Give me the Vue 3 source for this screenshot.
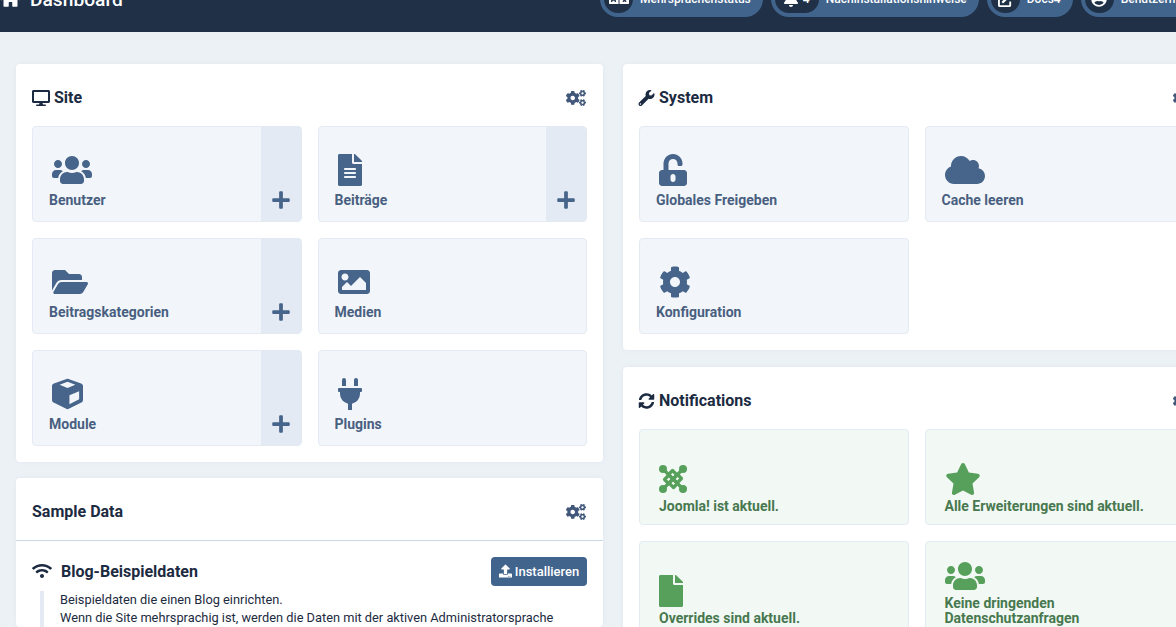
<script setup>
const I = {
  users: ['0 0 640 512', 'M96 224c35.3 0 64-28.7 64-64s-28.7-64-64-64-64 28.7-64 64 28.7 64 64 64zm448 0c35.3 0 64-28.7 64-64s-28.7-64-64-64-64 28.7-64 64 28.7 64 64 64zm32 32h-64c-17.6 0-33.5 7.1-45.1 18.6 40.3 22.1 68.9 62 75.1 109.4h66c17.7 0 32-14.3 32-32v-32c0-35.3-28.7-64-64-64zm-256 0c61.9 0 112-50.1 112-112S381.9 32 320 32 208 82.1 208 144s50.1 112 112 112zm76.8 32h-8.3c-20.8 10-43.9 16-68.5 16s-47.6-6-68.5-16h-8.3C179.6 288 128 339.6 128 403.2V432c0 26.5 21.5 48 48 48h288c26.5 0 48-21.5 48-48v-28.8c0-63.6-51.6-115.2-115.2-115.2zm-223.7-13.4C161.5 263.1 145.6 256 128 256H64c-35.3 0-64 28.7-64 64v32c0 17.7 14.3 32 32 32h65.9c6.3-47.4 34.9-87.3 75.2-109.4z'],
  fileAlt: ['0 0 384 512', 'M224 136V0H24C10.7 0 0 10.7 0 24v464c0 13.3 10.7 24 24 24h336c13.3 0 24-10.7 24-24V160H248c-13.2 0-24-10.8-24-24zm64 236c0 6.6-5.4 12-12 12H108c-6.6 0-12-5.4-12-12v-8c0-6.6 5.4-12 12-12h168c6.6 0 12 5.4 12 12v8zm0-64c0 6.6-5.4 12-12 12H108c-6.6 0-12-5.4-12-12v-8c0-6.6 5.4-12 12-12h168c6.6 0 12 5.4 12 12v8zm0-72v8c0 6.6-5.4 12-12 12H108c-6.6 0-12-5.4-12-12v-8c0-6.6 5.4-12 12-12h168c6.6 0 12 5.4 12 12zm96-114.1v6.1H256V0h6.1c6.4 0 12.5 2.5 17 7l97.9 98c4.5 4.5 7 10.6 7 16.9z'],
  file: ['0 0 384 512', 'M224 136V0H24C10.7 0 0 10.7 0 24v464c0 13.3 10.7 24 24 24h336c13.3 0 24-10.7 24-24V160H248c-13.2 0-24-10.8-24-24zm160-14.1v6.1H256V0h6.1c6.4 0 12.5 2.5 17 7l97.9 98c4.5 4.5 7 10.6 7 16.9z'],
  folder: ['0 0 576 512', 'M572.694 292.093L500.27 416.248A63.997 63.997 0 0 1 444.989 448H45.025c-18.523 0-30.064-20.093-20.731-36.093l72.424-124.155A64 64 0 0 1 152 256h399.964c18.523 0 30.064 20.093 20.73 36.093zM152 224h328v-48c0-26.51-21.49-48-48-48H272l-64-64H48C21.49 64 0 85.49 0 112v278.046l69.077-118.418C86.214 242.25 117.989 224 152 224z'],
  image: ['0 0 512 512', 'M464 448H48c-26.51 0-48-21.49-48-48V112c0-26.51 21.49-48 48-48h416c26.51 0 48 21.49 48 48v288c0 26.51-21.49 48-48 48zM112 120c-30.928 0-56 25.072-56 56s25.072 56 56 56 56-25.072 56-56-25.072-56-56-56zM64 384h384V272l-87.515-87.515c-4.686-4.686-12.284-4.686-16.971 0L208 320l-55.515-55.515c-4.686-4.686-12.284-4.686-16.971 0L64 336v48z'],
  cube: ['0 0 512 512', 'M239.1 6.3l-208 78c-18.7 7-31.1 25-31.1 45v225.1c0 18.2 10.3 34.8 26.5 42.9l208 104c13.5 6.8 29.4 6.8 42.9 0l208-104c16.3-8.1 26.5-24.8 26.5-42.9V129.3c0-20-12.4-37.9-31.1-44.9l-208-78C262 2.2 250 2.2 239.1 6.3zM256 52l130 52-130 54-130-54zM288 424.4V275.5l160-65v133.9l-160 80z'],
  plug: ['0 0 384 512', 'M320,32a32,32,0,0,0-64,0v96h64Zm48,128H16A16,16,0,0,0,0,176v32a16,16,0,0,0,16,16H32v32A160.07,160.07,0,0,0,160,412.8V512h64V412.8A160.07,160.07,0,0,0,352,256V224h16a16,16,0,0,0,16-16V176A16,16,0,0,0,368,160ZM128,32a32,32,0,0,0-64,0v96h64Z'],
  unlock: ['0 0 448 512', 'M400 256H152V152.9c0-39.6 31.7-72.5 71.3-72.9 40-.4 72.7 32.1 72.7 72v16c0 13.3 10.7 24 24 24h32c13.3 0 24-10.7 24-24v-16C376 68 307.5-.3 223.5 0 139.5.3 72 69.5 72 153.5V256H48c-26.5 0-48 21.5-48 48v160c0 26.5 21.5 48 48 48h352c26.5 0 48-21.5 48-48V304c0-26.5-21.5-48-48-48zM264 408c0 22.1-17.9 40-40 40s-40-17.9-40-40v-48c0-22.1 17.9-40 40-40s40 17.9 40 40v48z'],
  cloud: ['0 0 640 512', 'M537.6 226.6c4.1-10.7 6.4-22.4 6.4-34.6 0-53-43-96-96-96-19.7 0-38.1 6-53.3 16.2C367 64.2 315.3 32 256 32c-88.4 0-160 71.6-160 160 0 2.7.1 5.4.2 8.1C40.2 219.8 0 273.2 0 336c0 79.5 64.5 144 144 144h368c70.7 0 128-57.3 128-128 0-61.9-44-113.6-102.4-125.4z'],
  cog: ['0 0 512 512', 'M487.4 315.7l-42.6-24.6c4.3-23.2 4.3-47 0-70.2l42.6-24.6c4.9-2.8 7.1-8.6 5.5-14-11.1-35.6-30-67.8-54.7-94.6-3.8-4.1-10-5.1-14.8-2.3L380.8 110c-17.9-15.4-38.5-27.3-60.8-35.1V25.8c0-5.6-3.9-10.5-9.4-11.7-36.7-8.2-74.3-7.8-109.2 0-5.5 1.2-9.4 6.1-9.4 11.7V75c-22.2 7.9-42.8 19.8-60.8 35.1L88.7 85.5c-4.9-2.8-11-1.9-14.8 2.3-24.7 26.7-43.6 58.9-54.7 94.6-1.7 5.4.6 11.2 5.5 14L67.3 221c-4.3 23.2-4.3 47 0 70.2l-42.6 24.6c-4.9 2.8-7.1 8.6-5.5 14 11.1 35.6 30 67.8 54.7 94.6 3.8 4.1 10 5.1 14.8 2.3l42.6-24.6c17.9 15.4 38.5 27.3 60.8 35.1v49.2c0 5.6 3.9 10.5 9.4 11.7 36.7 8.2 74.3 7.8 109.2 0 5.5-1.2 9.4-6.1 9.4-11.7v-49.2c22.2-7.9 42.8-19.8 60.8-35.1l42.6 24.6c4.9 2.8 11 1.9 14.8-2.3 24.7-26.7 43.6-58.9 54.7-94.6 1.5-5.5-.7-11.3-5.6-14.1zM256 336c-44.1 0-80-35.9-80-80s35.9-80 80-80 80 35.9 80 80-35.9 80-80 80z'],
  cogs: ['0 0 640 512', 'M512.1 191l-8.2 14.3c-3 5.3-9.4 7.5-15.1 5.4-11.8-4.4-22.6-10.7-32.1-18.6-4.6-3.8-5.8-10.5-2.8-15.7l8.2-14.3c-6.9-8-12.3-17.3-15.9-27.4h-16.5c-6 0-11.2-4.3-12.2-10.3-2-12-2.1-24.6 0-37.1 1-6 6.2-10.4 12.2-10.4h16.5c3.6-10.1 9-19.4 15.9-27.4l-8.2-14.3c-3-5.2-1.9-11.9 2.8-15.7 9.5-7.9 20.4-14.2 32.1-18.6 5.7-2.1 12.1.1 15.1 5.4l8.2 14.3c10.5-1.9 21.2-1.9 31.7 0L552 6.3c3-5.3 9.4-7.5 15.1-5.4 11.8 4.4 22.6 10.7 32.1 18.6 4.6 3.8 5.8 10.5 2.8 15.7l-8.2 14.3c6.9 8 12.3 17.3 15.9 27.4h16.5c6 0 11.2 4.3 12.2 10.3 2 12 2.1 24.6 0 37.1-1 6-6.2 10.4-12.2 10.4h-16.5c-3.6 10.1-9 19.4-15.9 27.4l8.2 14.3c3 5.2 1.9 11.9-2.8 15.7-9.5 7.9-20.4 14.2-32.1 18.6-5.7 2.1-12.1-.1-15.1-5.4l-8.2-14.3c-10.4 1.9-21.2 1.9-31.7 0zm-10.5-58.8c38.5 29.6 82.4-14.3 52.8-52.8-38.5-29.7-82.4 14.3-52.8 52.8zM386.3 286.1l33.7 16.8c10.1 5.8 14.5 18.1 10.5 29.1-8.9 24.2-26.4 46.4-42.6 65.8-7.4 8.9-20.2 11.1-30.3 5.3l-29.1-16.8c-16 13.7-34.6 24.6-54.9 31.7v33.6c0 11.6-8.3 21.6-19.7 23.6-24.6 4.2-50.4 4.4-75.9 0-11.5-2-20-11.9-20-23.6V418c-20.3-7.2-38.9-18-54.9-31.7L74 403c-10 5.8-22.9 3.6-30.3-5.3-16.2-19.4-33.3-41.6-42.2-65.7-4-10.9.4-23.2 10.5-29.1l33.3-16.8c-3.9-20.9-3.9-42.4 0-63.4L12 205.8c-10.1-5.8-14.6-18.1-10.5-29 8.9-24.2 26-46.4 42.2-65.8 7.4-8.9 20.2-11.1 30.3-5.3l29.1 16.8c16-13.7 34.6-24.6 54.9-31.7V57.1c0-11.5 8.2-21.5 19.6-23.5 24.6-4.2 50.5-4.4 76-.1 11.5 2 20 11.9 20 23.6v33.6c20.3 7.2 38.9 18 54.9 31.7l29.1-16.8c10-5.8 22.9-3.6 30.3 5.3 16.2 19.4 33.2 41.6 42.1 65.8 4 10.9.1 23.2-10 29.1l-33.7 16.8c3.9 21 3.9 42.5 0 63.5zm-117.6 21.1c59.2-77-28.7-164.9-105.7-105.7-59.2 77 28.7 164.9 105.7 105.7zm243.4 182.7l-8.2 14.3c-3 5.3-9.4 7.5-15.1 5.4-11.8-4.4-22.6-10.7-32.1-18.6-4.6-3.8-5.8-10.5-2.8-15.7l8.2-14.3c-6.9-8-12.3-17.3-15.9-27.4h-16.5c-6 0-11.2-4.3-12.2-10.3-2-12-2.1-24.6 0-37.1 1-6 6.2-10.4 12.2-10.4h16.5c3.6-10.1 9-19.4 15.9-27.4l-8.2-14.3c-3-5.2-1.9-11.9 2.8-15.7 9.5-7.9 20.4-14.2 32.1-18.6 5.7-2.1 12.1.1 15.1 5.4l8.2 14.3c10.5-1.9 21.2-1.9 31.7 0l8.2-14.3c3-5.3 9.4-7.5 15.1-5.4 11.8 4.4 22.6 10.7 32.1 18.6 4.6 3.8 5.8 10.5 2.8 15.7l-8.2 14.3c6.9 8 12.3 17.3 15.9 27.4h16.5c6 0 11.2 4.3 12.2 10.3 2 12 2.1 24.6 0 37.1-1 6-6.2 10.4-12.2 10.4h-16.5c-3.6 10.1-9 19.4-15.9 27.4l8.2 14.3c3 5.2 1.9 11.9-2.8 15.7-9.5 7.9-20.4 14.2-32.1 18.6-5.7 2.1-12.1-.1-15.1-5.4l-8.2-14.3c-10.4 1.9-21.2 1.9-31.7 0zM501.6 431c38.5 29.6 82.4-14.3 52.8-52.8-38.5-29.6-82.4 14.3-52.8 52.8z'],
  desktop: ['0 0 576 512', 'M528 0H48C21.5 0 0 21.5 0 48v320c0 26.5 21.5 48 48 48h192l-16 48h-72c-13.3 0-24 10.7-24 24s10.7 24 24 24h272c13.3 0 24-10.7 24-24s-10.7-24-24-24h-72l-16-48h192c26.5 0 48-21.5 48-48V48c0-26.5-21.5-48-48-48zm-16 352H64V64h448v288z'],
  wrench: ['0 0 512 512', 'M507.73 109.1c-2.24-9.03-13.54-12.09-20.12-5.51l-74.36 74.36-67.88-11.31-11.31-67.88 74.36-74.36c6.62-6.62 3.43-17.9-5.66-20.16-47.38-11.74-99.55.91-136.58 37.93-39.64 39.64-50.55 97.1-34.05 147.2L18.74 402.76c-24.99 24.99-24.99 65.51 0 90.5 24.99 24.99 65.51 24.99 90.5 0l213.21-213.21c50.12 16.71 107.47 5.68 147.37-34.22 37.07-37.07 49.7-89.32 37.91-136.73zM64 472c-13.25 0-24-10.75-24-24 0-13.26 10.75-24 24-24s24 10.74 24 24c0 13.25-10.75 24-24 24z'],
  sync: ['0 0 512 512', 'M370.72 133.28C339.458 104.008 298.888 87.962 255.848 88c-77.458.068-144.328 53.178-162.791 126.85-1.344 5.363-6.122 9.15-11.651 9.15H24.103c-7.498 0-13.194-6.807-11.807-14.176C33.933 94.924 134.813 8 256 8c66.448 0 126.791 26.136 171.315 68.685L463.03 40.97C478.149 25.851 504 36.559 504 57.941V192c0 13.255-10.745 24-24 24H345.941c-21.382 0-32.09-25.851-16.971-40.971l41.75-41.749zM32 296h134.059c21.382 0 32.09 25.851 16.971 40.971l-41.75 41.75c31.262 29.273 71.835 45.319 114.876 45.28 77.418-.07 144.315-53.144 162.787-126.849 1.344-5.363 6.122-9.15 11.651-9.15h57.304c7.498 0 13.194 6.807 11.807 14.176C478.067 417.076 377.187 504 256 504c-66.448 0-126.791-26.136-171.315-68.685L48.97 471.03C33.851 486.149 8 475.441 8 454.059V320c0-13.255 10.745-24 24-24z'],
  star: ['0 0 576 512', 'M259.3 17.8L194 150.2 47.9 171.5c-26.2 3.8-36.7 36.1-17.7 54.6l105.7 103-25 145.5c-4.5 26.3 23.2 46 46.4 33.7L288 439.6l130.7 68.7c23.2 12.2 50.9-7.4 46.4-33.7l-25-145.5 105.7-103c19-18.5 8.5-50.8-17.7-54.6L382 150.2 316.7 17.8c-11.7-23.6-45.6-23.9-57.4 0z'],
  plus: ['0 0 448 512', 'M416 208H272V64c0-17.67-14.33-32-32-32h-32c-17.67 0-32 14.33-32 32v144H32c-17.67 0-32 14.33-32 32v32c0 17.67 14.33 32 32 32h144v144c0 17.67 14.33 32 32 32h32c17.67 0 32-14.33 32-32V304h144c17.67 0 32-14.33 32-32v-32c0-17.67-14.33-32-32-32z'],
  wifi: ['0 0 640 512', 'M634.91 154.88C457.74-8.99 182.19-8.93 5.09 154.88c-6.66 6.16-6.79 16.59-.35 22.98l34.24 33.97c6.14 6.1 16.02 6.23 22.4.38 145.92-133.68 371.3-133.71 517.25 0 6.38 5.85 16.26 5.71 22.4-.38l34.24-33.97c6.43-6.39 6.3-16.82-.36-22.98zM320 352c-35.35 0-64 28.65-64 64s28.65 64 64 64 64-28.65 64-64-28.65-64-64-64zm202.67-83.59c-115.26-101.93-290.21-101.82-405.34 0-6.9 6.1-7.12 16.69-.57 23.15l34.44 33.99c6 5.92 15.66 6.32 22.05.8 83.95-72.57 209.74-72.41 293.49 0 6.39 5.52 16.05 5.13 22.05-.8l34.44-33.99c6.56-6.46 6.33-17.06-.56-23.15z'],
  upload: ['0 0 512 512', 'M296 384h-80c-13.3 0-24-10.7-24-24V192h-87.7c-17.8 0-26.7-21.5-14.1-34.1L242.3 5.7c7.5-7.5 19.8-7.5 27.3 0l152.2 152.2c12.6 12.6 3.7 34.1-14.1 34.1H320v168c0 13.3-10.7 24-24 24zm216-8v112c0 13.3-10.7 24-24 24H24c-13.3 0-24-10.7-24-24V376c0-13.3 10.7-24 24-24h136v8c0 30.9 25.1 56 56 56h80c30.9 0 56-25.1 56-56v-8h136c13.3 0 24 10.7 24 24zm-124 88c0-11-9-20-20-20s-20 9-20 20 9 20 20 20 20-9 20-20zm64 0c0-11-9-20-20-20s-20 9-20 20 9 20 20 20 20-9 20-20z'],
  bell: ['0 0 448 512', 'M224 512c35.32 0 63.97-28.65 63.97-64H160.03c0 35.35 28.65 64 63.97 64zm215.39-149.71c-19.32-20.76-55.47-51.99-55.47-154.29 0-77.7-54.48-139.9-127.94-155.16V32c0-17.67-14.32-32-31.98-32s-31.98 14.33-31.98 32v20.84C118.56 68.1 64.08 130.3 64.08 208c0 102.3-36.15 133.53-55.47 154.29-6 6.45-8.66 14.16-8.61 21.71.11 16.4 12.98 32 32.1 32h383.8c19.12 0 32-15.6 32.1-32 .05-7.55-2.61-15.27-8.61-21.71z'],
  home: ['0 0 576 512', 'M280.37 148.26L96 300.11V464a16 16 0 0 0 16 16l112.06-.29a16 16 0 0 0 15.92-16V368a16 16 0 0 1 16-16h64a16 16 0 0 1 16 16v95.64a16 16 0 0 0 16 16.05L464 480a16 16 0 0 0 16-16V300L295.67 148.26a12.19 12.19 0 0 0-15.3 0zM571.6 251.47L488 182.56V44.05a12 12 0 0 0-12-12h-56a12 12 0 0 0-12 12v72.61L318.47 43a48 48 0 0 0-61 0L4.34 251.47a12 12 0 0 0-1.6 16.9l25.5 31A12 12 0 0 0 45.15 301l235.22-193.74a12.19 12.19 0 0 1 15.3 0L530.9 301a12 12 0 0 0 16.9-1.6l25.5-31a12 12 0 0 0-1.7-16.93z'],
  extLink: ['0 0 512 512', 'M432 320h-32a16 16 0 0 0-16 16v112H64V128h144a16 16 0 0 0 16-16V80a16 16 0 0 0-16-16H48a48 48 0 0 0-48 48v352a48 48 0 0 0 48 48h352a48 48 0 0 0 48-48V336a16 16 0 0 0-16-16zM488 0H360c-21.37 0-32.05 25.91-17 41l35.73 35.73L135 320.37a24 24 0 0 0 0 34L157.67 377a24 24 0 0 0 34 0l243.61-243.68L471 169c15 15 41 4.5 41-17V24a24 24 0 0 0-24-24z'],
  userCircle: ['0 0 496 512', 'M248 8C111 8 0 119 0 256s111 248 248 248 248-111 248-248S385 8 248 8zm0 96c48.6 0 88 39.4 88 88s-39.4 88-88 88-88-39.4-88-88 39.4-88 88-88zm0 344c-58.7 0-111.3-26.6-146.5-68.2 18.8-35.4 55.6-59.8 98.5-59.8 2.4 0 4.8.4 7.1 1.1 13 4.2 26.6 6.9 40.9 6.9 14.3 0 28-2.7 40.9-6.9 2.3-.7 4.7-1.1 7.1-1.1 42.9 0 79.7 24.4 98.5 59.8C359.3 421.4 306.7 448 248 448z'],
  language: ['0 0 640 512', 'M152.1 236.2c-3.5-12.1-7.8-33.2-7.8-33.2h-.5s-4.3 21.1-7.8 33.2l-11.1 37.5H163zM616 96H336v320h280c13.3 0 24-10.7 24-24V120c0-13.3-10.7-24-24-24zm-24 120c0 6.6-5.4 12-12 12h-11.4c-6.9 23.6-21.7 47.4-42.7 69.9 8.4 6.4 17.1 12.5 26.1 18 5.5 3.4 7.3 10.5 4.1 16.2l-7.9 13.9c-3.4 5.9-10.9 7.8-16.7 4.3-12.6-7.8-24.5-16.1-35.4-24.9-10.9 8.7-22.7 17.1-35.4 24.9-5.8 3.5-13.3 1.6-16.7-4.3l-7.9-13.9c-3.2-5.6-1.4-12.8 4.2-16.2 9.3-5.7 18-11.7 26.1-18-7.9-8.4-14.9-17-21-25.7-4-5.7-2.2-13.6 3.7-17.1l13.8-8.2c5.4-3.2 12.4-1.7 16 3.4 5 7 10.8 14 17.4 20.9 13.5-14.2 23.8-28.9 30-43.2H412c-6.6 0-12-5.4-12-12v-16c0-6.6 5.4-12 12-12h64v-16c0-6.6 5.4-12 12-12h16c6.6 0 12 5.4 12 12v16h64c6.6 0 12 5.4 12 12zM0 120v272c0 13.3 10.7 24 24 24h280V96H24c-13.3 0-24 10.7-24 24zm58.9 216.1L116.4 167c1.7-4.9 6.2-8.1 11.4-8.1h32.5c5.1 0 9.7 3.3 11.4 8.1l57.5 169.1c2.6 7.8-3.1 15.9-11.4 15.9h-22.9a12 12 0 0 1-11.5-8.6L173 313h-58.4l-9.2 30.4c-1.5 5.1-6.2 8.6-11.5 8.6H71.9c-8.3 0-15.6-8.1-13-15.9z'],
}

const pills = [
  { icon: 'language', text: 'Mehrsprachenstatus' },
  { icon: 'bell', text: 'Nachinstallationshinweise', badge: '4' },
  { icon: 'extLink', text: 'Docs4' },
  { icon: 'userCircle', text: 'Benutzermenü' },
]
const site = [
  { icon: 'users', w: 40, label: 'Benutzer', add: true },
  { icon: 'fileAlt', w: 24, label: 'Beiträge', add: true },
  { icon: 'folder', w: 36, label: 'Beitragskategorien', add: true },
  { icon: 'image', w: 32, label: 'Medien' },
  { icon: 'cube', w: 31, label: 'Module', add: true },
  { icon: 'plug', w: 24, label: 'Plugins' },
]
const system = [
  { icon: 'unlock', w: 28, label: 'Globales Freigeben' },
  { icon: 'cloud', w: 40, label: 'Cache leeren' },
  { icon: 'cog', w: 32, label: 'Konfiguration' },
]
const notes = [
  { icon: 'joomla', w: 28, label: 'Joomla! ist aktuell.' },
  { icon: 'star', w: 36, label: 'Alle Erweiterungen sind aktuell.' },
  { icon: 'file', w: 24, label: 'Overrides sind aktuell.' },
  { icon: 'users', w: 40, label: 'Keine dringenden Datenschutzanfragen' },
]
</script>

<template>
  <div class="page">
    <header class="top">
      <div class="brand">
        <svg class="home" :viewBox="I.home[0]"><path :d="I.home[1]" /></svg>
        <span>Dashboard</span>
      </div>
      <div class="pills">
        <div v-for="p in pills" :key="p.text" class="pill">
          <span class="pill-ico" :class="{ wide: p.badge }">
            <svg :class="'i-' + p.icon" :viewBox="I[p.icon][0]"><path :d="I[p.icon][1]" /></svg>
            <b v-if="p.badge">{{ p.badge }}</b>
          </span>
          <span class="pill-text">{{ p.text }}</span>
        </div>
      </div>
    </header>

    <main class="cols">
      <div class="col">
        <section class="card">
          <div class="head">
            <h2>
              <svg class="h-ico" :viewBox="I.desktop[0]"><path :d="I.desktop[1]" /></svg>Site
            </h2>
            <svg class="cogs" :viewBox="I.cogs[0]"><path :d="I.cogs[1]" /></svg>
          </div>
          <div class="tiles">
            <div v-for="t in site" :key="t.label" class="tile">
              <div class="tile-main">
                <svg class="t-ico" :viewBox="I[t.icon][0]" :style="{ width: t.w + 'px' }"><path :d="I[t.icon][1]" /></svg>
                <span class="t-label">{{ t.label }}</span>
              </div>
              <div v-if="t.add" class="add">
                <svg :viewBox="I.plus[0]"><path :d="I.plus[1]" /></svg>
              </div>
            </div>
          </div>
        </section>

        <section class="card sample">
          <div class="head ruled">
            <h2>Sample Data</h2>
            <svg class="cogs" :viewBox="I.cogs[0]"><path :d="I.cogs[1]" /></svg>
          </div>
          <div class="blog">
            <div class="blog-head">
              <svg class="wifi" :viewBox="I.wifi[0]"><path :d="I.wifi[1]" /></svg>
              <h3>Blog-Beispieldaten</h3>
              <button class="install">
                <svg :viewBox="I.upload[0]"><path :d="I.upload[1]" /></svg>Installieren
              </button>
            </div>
            <div class="blog-text">
              <p>Beispieldaten die einen Blog einrichten.</p>
              <p>Wenn die Site mehrsprachig ist, werden die Daten mit der aktiven Administratorsprache</p>
            </div>
          </div>
        </section>
      </div>

      <div class="col">
        <section class="card">
          <div class="head">
            <h2>
              <svg class="h-ico tool" :viewBox="I.wrench[0]"><path :d="I.wrench[1]" /></svg>System
            </h2>
            <svg class="cogs" :viewBox="I.cogs[0]"><path :d="I.cogs[1]" /></svg>
          </div>
          <div class="tiles">
            <div v-for="t in system" :key="t.label" class="tile">
              <div class="tile-main">
                <svg class="t-ico" :viewBox="I[t.icon][0]" :style="{ width: t.w + 'px' }"><path :d="I[t.icon][1]" /></svg>
                <span class="t-label">{{ t.label }}</span>
              </div>
            </div>
          </div>
        </section>

        <section class="card notes">
          <div class="head">
            <h2>
              <svg class="h-ico tool" :viewBox="I.sync[0]"><path :d="I.sync[1]" /></svg>Notifications
            </h2>
            <svg class="cogs" :viewBox="I.cogs[0]"><path :d="I.cogs[1]" /></svg>
          </div>
          <div class="tiles">
            <div v-for="t in notes" :key="t.label" class="tile ok">
              <div class="tile-main">
                <svg v-if="t.icon === 'joomla'" class="t-ico joomla" viewBox="0 0 28 28">
                  <g v-for="r in [0, 90, 180, 270]" :key="r" :transform="`rotate(${r} 14 14)`">
                    <path class="j-band" d="M4 4L18 18L22.5 13.5L18 9" />
                    <circle cx="4" cy="4" r="4" />
                  </g>
                </svg>
                <svg v-else class="t-ico" :viewBox="I[t.icon][0]" :style="{ width: t.w + 'px' }"><path :d="I[t.icon][1]" /></svg>
                <span class="t-label">{{ t.label }}</span>
              </div>
            </div>
          </div>
        </section>
      </div>
    </main>
  </div>
</template>

<style>
html, body { margin: 0; height: 100%; overflow: hidden; background: #ecf1f6; }
</style>

<style scoped>
* { box-sizing: border-box; }
.page {
  width: 1176px;
  height: 627px;
  overflow: hidden;
  font-family: Roboto, "Liberation Sans", sans-serif;
  background: #ecf1f6;
  color: #1c2b41;
}
svg { fill: currentColor; display: block; flex: none; }

.top {
  height: 32px;
  background: #1f3047;
  color: #fff;
  display: flex;
  align-items: flex-end;
}
.brand {
  flex: 1;
  display: flex;
  align-items: flex-end;
  gap: 9px;
  height: 19px;
  margin-bottom: 25px;
  font-size: 19.2px;
  line-height: 19px;
  font-weight: 500;
  white-space: nowrap;
}
.brand span { margin-bottom: -2px; }
.home { width: 21px; height: 19px; margin-bottom: -1px; }
.pills {
  width: 576px;
  flex: none;
  display: flex;
  gap: 8px;
  margin-bottom: 15px;
}
.pill {
  height: 36px;
  border-radius: 18px;
  background: #41648d;
  display: flex;
  align-items: center;
  flex: none;
  padding: 0 12px 0 4px;
  font-size: 12px;
  font-weight: 500;
  white-space: nowrap;
}
.pill-ico {
  width: 29px;
  height: 28px;
  border-radius: 14px;
  background: #1f3047;
  display: flex;
  align-items: center;
  justify-content: center;
  gap: 5px;
  flex: none;
  font-size: 12px;
}
.pill-ico b { font-weight: 500; }
.pill-ico.wide { width: 44px; }
.pill-ico svg { width: 16px; height: 16px; }
.pill-ico .i-language { width: 20px; }
.pill-ico .i-bell { width: 14px; }
.pill-ico .i-extLink { width: 15px; height: 15px; }
.pill-text { margin-left: 7px; }

.cols {
  display: grid;
  grid-template-columns: 587px 587px;
  gap: 20px;
  padding: 32px 16px 0;
}
.col { display: flex; flex-direction: column; gap: 16px; min-width: 0; }
.notes { margin-top: 1px; }
.card {
  background: #fff;
  border-radius: 4px;
  padding: 0 16px 16px;
  box-shadow: 0 0 4px rgba(100, 130, 170, 0.08);
}
.head {
  height: 62px;
  padding-top: 5px;
  display: flex;
  align-items: center;
  justify-content: space-between;
}
h2 {
  margin: 0;
  font-size: 16px;
  line-height: 20px;
  font-weight: 700;
  display: flex;
  align-items: center;
  color: #1c2b41;
}
.h-ico { width: 18px; height: 16px; margin-right: 4px; }
.h-ico.tool { margin-left: -1px; width: 17px; }
.cogs { width: 20px; height: 16px; margin-right: 1px; color: #41587a; }

.tiles {
  display: grid;
  grid-template-columns: 1fr 1fr;
  gap: 16px;
}
.tile {
  height: 96px;
  background: #f2f6fb;
  border: 1px solid #e3eaf4;
  border-radius: 4px;
  display: flex;
  overflow: hidden;
  color: #495f80;
}
.tile-main {
  flex: 1;
  min-width: 0;
  display: flex;
  flex-direction: column;
  justify-content: flex-end;
  padding: 0 16px 13px;
}
.t-ico { height: 32px; margin-bottom: 6px; margin-left: 3px; color: #47648a; }
.t-label { font-size: 14px; line-height: 16px; font-weight: 700; }
.add {
  width: 40px;
  background: #e3eaf4;
  display: flex;
  align-items: flex-end;
  justify-content: center;
  padding-bottom: 11px;
  color: #47648a;
}
.add svg { width: 18px; height: 20px; }
.tile.ok { background: #f2f9f4; color: #47784f; }
.tile.ok .tile-main { padding: 0 16px 10px 19px; }
.tile.ok .t-label { line-height: 15px; }
.tile.ok .t-ico { color: #57a05b; margin-left: 0; margin-bottom: 4px; }
.tile.ok .t-ico.joomla { width: 28px; height: 28px; margin-bottom: 6px; }
.j-band { fill: none; stroke: #57a05b; stroke-width: 3.2; stroke-linejoin: round; }

.sample { padding-bottom: 0; }
.ruled {
  height: 63px;
  margin: 0 -16px;
  padding: 5px 16px 0;
  border-bottom: 1px solid #c9d8e6;
}
.blog { padding-top: 15px; }
.blog-head { display: flex; align-items: center; height: 30px; }
.wifi { width: 20px; height: 16px; margin-right: 9px; color: #1c2b41; }
h3 { margin: 0; font-size: 16px; font-weight: 700; flex: 1; color: #1c2b41; }
.install {
  height: 29px;
  width: 96px;
  border: 0;
  border-radius: 4px;
  background: #41648d;
  color: #fff;
  font: 500 13px Roboto, sans-serif;
  display: flex;
  align-items: center;
  justify-content: center;
  gap: 3px;
  padding: 0;
}
.install svg { width: 13px; height: 14px; }
.blog-text {
  margin: 5px 0 0 8px;
  padding-left: 16px;
  border-left: 4px solid #e3eaf4;
  font-size: 12.8px;
  line-height: 18px;
  color: #1c2b41;
}
.blog-text p { margin: 0; white-space: nowrap; }
</style>
